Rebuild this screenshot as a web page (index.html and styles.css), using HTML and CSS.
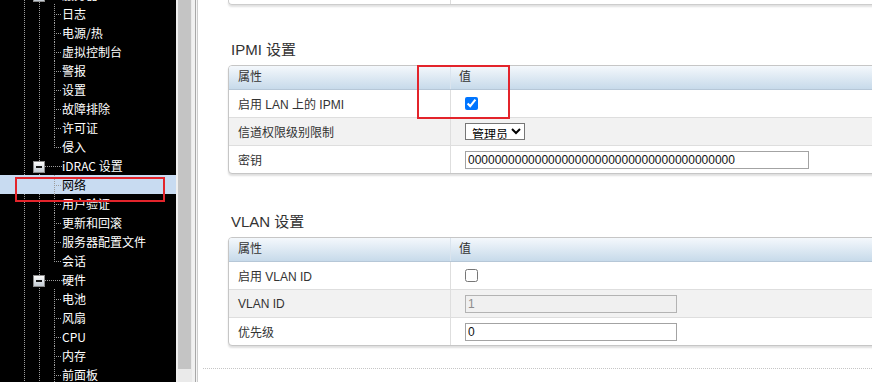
FILE: index.html
```html
<!DOCTYPE html>
<html lang="zh-CN">
<head>
<meta charset="utf-8">
<title>iDRAC 网络</title>
<link rel="stylesheet" href="styles.css">
</head>
<body>
<aside class="sidebar">
  <div class="tree">
    <div class="node group"><span class="toggle"></span><span class="label">服务器</span></div>
    <div class="children">
      <div class="node leaf">日志</div>
      <div class="node leaf">电源/热</div>
      <div class="node leaf">虚拟控制台</div>
      <div class="node leaf">警报</div>
      <div class="node leaf">设置</div>
      <div class="node leaf">故障排除</div>
      <div class="node leaf">许可证</div>
      <div class="node leaf last">侵入</div>
    </div>
    <div class="node group"><span class="toggle"></span><span class="label">iDRAC 设置</span></div>
    <div class="children">
      <div class="node leaf selected">网络</div>
      <div class="node leaf">用户验证</div>
      <div class="node leaf">更新和回滚</div>
      <div class="node leaf">服务器配置文件</div>
      <div class="node leaf last">会话</div>
    </div>
    <div class="node group"><span class="toggle"></span><span class="label">硬件</span></div>
    <div class="children">
      <div class="node leaf">电池</div>
      <div class="node leaf">风扇</div>
      <div class="node leaf">CPU</div>
      <div class="node leaf">内存</div>
      <div class="node leaf">前面板</div>
    </div>
  </div>
</aside>
<div class="scrollbar"><div class="thumb"></div></div>
<div class="divider"></div>
<main class="main">
  <div class="stub"></div>

  <section class="panel ipmi">
    <h2 class="title">IPMI 设置</h2>
    <div class="tbl">
      <div class="thead"><div class="th">属性</div><div class="th">值</div></div>
      <div class="row"><div class="cell">启用 LAN 上的 IPMI</div><div class="cell val"><input class="chk" type="checkbox" checked></div></div>
      <div class="row alt"><div class="cell">信道权限级别限制</div><div class="cell val"><select class="sel"><option>管理员</option><option>操作员</option><option>用户</option></select></div></div>
      <div class="row"><div class="cell">密钥</div><div class="cell val"><input class="txt key" type="text" value="0000000000000000000000000000000000000000"></div></div>
      <div class="mark"></div>
    </div>
  </section>

  <section class="panel vlan">
    <h2 class="title">VLAN 设置</h2>
    <div class="tbl">
      <div class="thead"><div class="th">属性</div><div class="th">值</div></div>
      <div class="row"><div class="cell">启用 VLAN ID</div><div class="cell val"><input class="chk" type="checkbox"></div></div>
      <div class="row alt"><div class="cell">VLAN ID</div><div class="cell val"><input class="txt short" type="text" value="1" disabled></div></div>
      <div class="row"><div class="cell">优先级</div><div class="cell val"><input class="txt short" type="text" value="0"></div></div>
    </div>
  </section>

  <div class="sep"></div>
</main>
</body>
</html>
```

FILE: styles.css
```css
* { box-sizing: border-box; }

html, body { margin: 0; }

body {
  display: flex;
  width: 872px;
  height: 382px;
  overflow: hidden;
  background: #fff;
  font-family: "Liberation Sans", "Noto Sans CJK SC", sans-serif;
}

/* ---------- sidebar tree ---------- */
.sidebar {
  width: 176px;
  flex: none;
  overflow: hidden;
  background-color: #000;
  background-image:
    repeating-linear-gradient(to bottom, #9c9c9c 0 1px, transparent 1px 2px),
    repeating-linear-gradient(to bottom, #9c9c9c 0 1px, transparent 1px 2px);
  background-size: 1px 100%, 1px 100%;
  background-position: 24px 0, 39px 0;
  background-repeat: no-repeat;
}

.tree {
  margin-top: -15px;
  font-family: "Noto Sans CJK SC", "Liberation Sans", sans-serif;
  font-size: 12px;
  color: #fff;
}

.node {
  height: 19px;
  display: flex;
  align-items: center;
  line-height: 19px;
  white-space: nowrap;
}

.group {
  padding-left: 33px;
  background: repeating-linear-gradient(to right, #9c9c9c 0 1px, transparent 1px 2px) 45px 10px / 17px 1px no-repeat;
}

.toggle {
  width: 12px;
  height: 12px;
  margin: 3px 17px 0 0;
  flex: none;
  border: 1px solid #8a8a8a;
  background: linear-gradient(#fcfcfc, #c3cbd3);
  display: flex;
  align-items: center;
  justify-content: center;
}

.toggle::before {
  content: "";
  width: 6px;
  height: 2px;
  background: #161616;
}

.leaf {
  padding-left: 62px;
  background-image:
    repeating-linear-gradient(to right, #9c9c9c 0 1px, transparent 1px 2px),
    repeating-linear-gradient(to bottom, #9c9c9c 0 1px, transparent 1px 2px);
  background-size: 8px 1px, 1px 100%;
  background-position: 54px 10px, 54px 0;
  background-repeat: no-repeat;
}

.leaf.last {
  background-size: 8px 1px, 1px 11px;
}

.selected {
  position: relative;
  background-color: #c8dbf1;
  color: #000;
}

.selected::after {
  content: "";
  position: absolute;
  left: 15px;
  top: 2px;
  width: 146px;
  height: 21px;
  border: 2px solid #e3242b;
}

/* ---------- scrollbar & frame ---------- */
.scrollbar {
  width: 16px;
  flex: none;
  background: #eaeaea;
  border-left: 2px solid #efefef;
  padding-right: 1px;
}

.thumb {
  height: 369px;
  background: #c4c4c4;
}

.divider {
  width: 6px;
  flex: none;
  background: linear-gradient(to right, #f1f1f1 0 3px, #a8a8a8 3px 4px, #f5f5f5 4px 5px, #cdcdcd 5px 6px);
}

/* ---------- main ---------- */
.main {
  flex: 1;
  min-width: 0;
  overflow: hidden;
  display: flex;
  flex-direction: column;
  color: #333;
  font-size: 12px;
}

.stub {
  flex: none;
  margin-left: 30px;
  width: 700px;
  height: 5px;
  border: 1px solid #cdcdcd;
  border-top: 0;
  border-radius: 0 0 4px 4px;
  box-shadow: 0 2px 2px rgba(0, 0, 0, 0.12);
  background: linear-gradient(to right, transparent 221px, #dcdcdc 221px 222px, transparent 222px);
}

.panel {
  flex: none;
  margin-left: 30px;
  width: 700px;
}

.ipmi { margin-top: 35px; }
.vlan { margin-top: 38px; }

.title {
  margin: 0 0 5px 3px;
  font-size: 15px;
  line-height: 20px;
  font-weight: normal;
  color: #333;
}

.tbl {
  position: relative;
  border: 1px solid #c6c6c6;
  border-radius: 4px;
  box-shadow: 0 2px 2px rgba(0, 0, 0, 0.13);
  background: #fff;
}

.thead {
  display: grid;
  grid-template-columns: 221px 1fr;
  height: 24px;
  border-bottom: 1px solid #b6c7d7;
  border-radius: 3px 3px 0 0;
  background: linear-gradient(#f4f8fc, #c7daea);
}

.th {
  padding-left: 9px;
  line-height: 23px;
  color: #333;
}

.th + .th {
  border-left: 1px solid #dae4ee;
  padding-left: 8px;
}

.row {
  display: grid;
  grid-template-columns: 221px 1fr;
  height: 27px;
}

.row + .row {
  height: 28px;
  border-top: 1px solid #dedede;
}

.alt { background: #f2f2f2; }

.cell {
  display: flex;
  align-items: center;
  padding-left: 9px;
  white-space: nowrap;
}

.val {
  border-left: 1px solid #dedede;
  padding-left: 14px;
}

.chk {
  margin: 0;
  width: 13px;
  height: 13px;
}

.sel {
  height: 17px;
  width: 60px;
  margin: 0;
  padding: 0 0 0 2px;
  font: 12px "Noto Sans CJK SC", "Liberation Sans", sans-serif;
  color: #000;
  background: #fff;
  border: 1px solid #767676;
  border-radius: 0;
}

.txt {
  height: 18px;
  margin: 0;
  padding: 0 2px;
  font: 12px "Liberation Sans", "Noto Sans CJK SC", sans-serif;
  color: #111;
  background: #fff;
  border: 1px solid #a3a3a3;
  border-radius: 0;
  outline: none;
}

.key { width: 344px; }
.short { width: 212px; }

.txt:disabled {
  background: #f0f0f0;
  color: #8c8c8c;
  border-color: #b3b3b3;
}

.mark {
  position: absolute;
  left: 188px;
  top: -1px;
  width: 93px;
  height: 54px;
  border: 2px solid #e3242b;
}

.sep {
  flex: none;
  margin: 22px 0 0 5px;
  border-top: 1px dotted #c6c6c6;
}
```
